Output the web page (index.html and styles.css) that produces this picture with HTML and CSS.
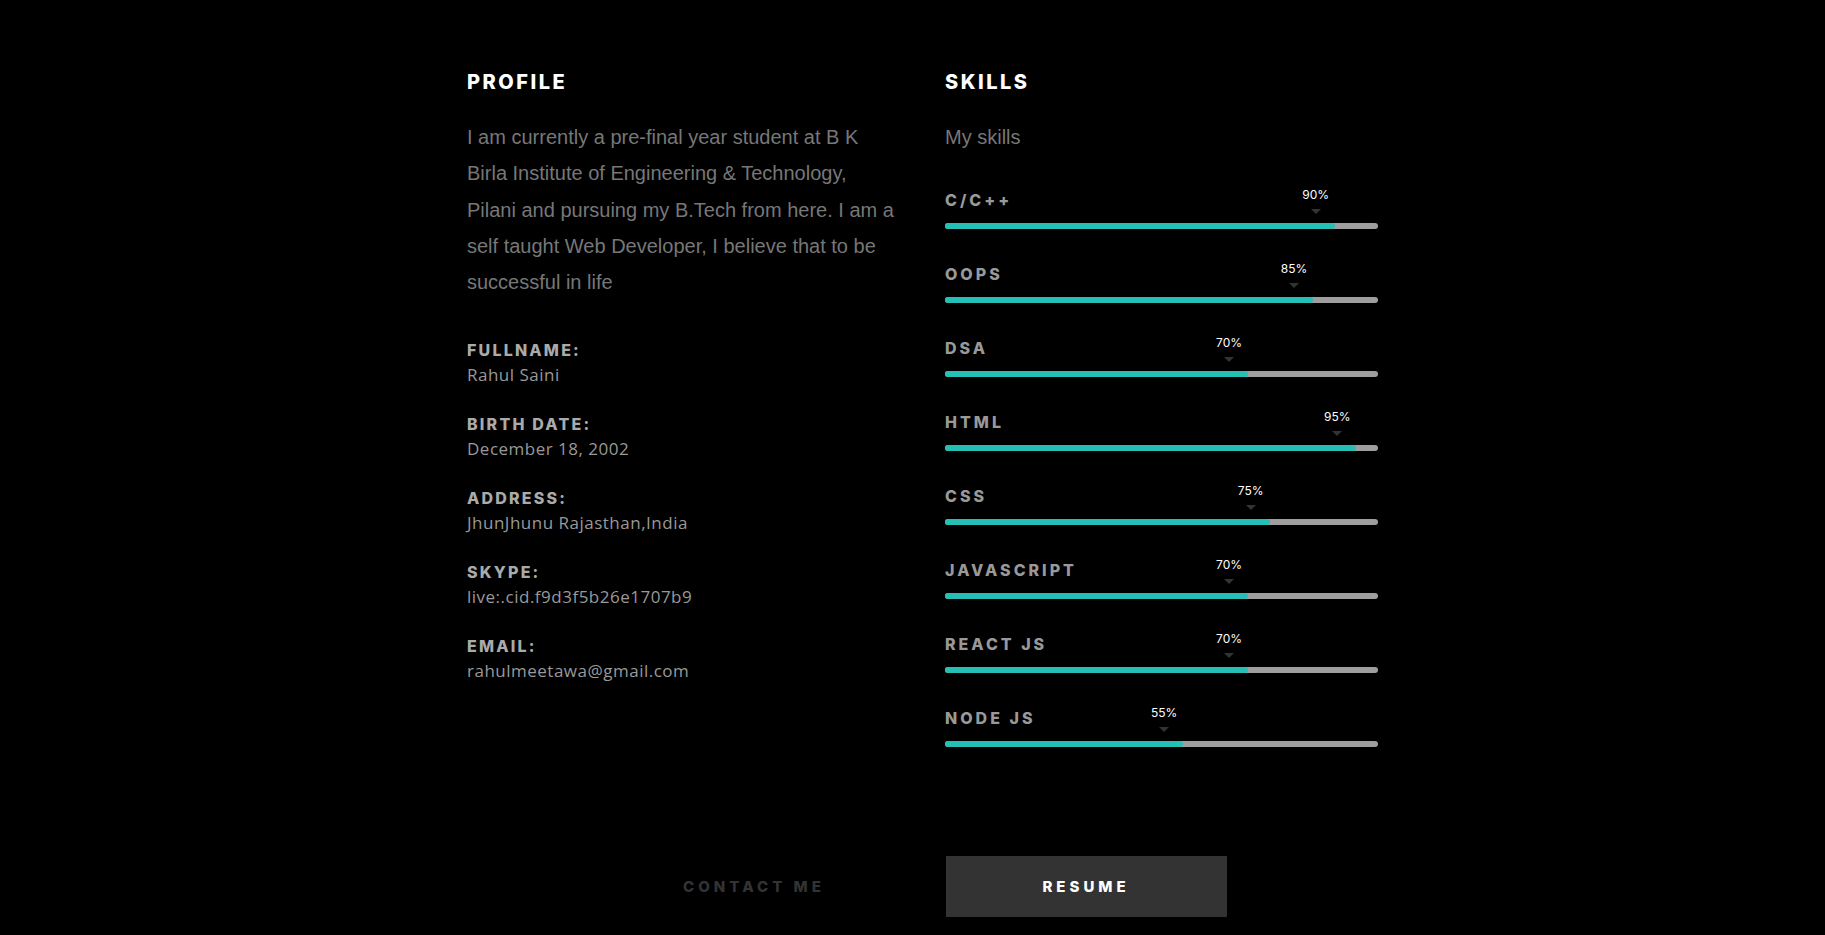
FILE: index.html
```html
<!DOCTYPE html>
<html lang="en">
<head>
<meta charset="utf-8">
<title>About</title>
<link rel="stylesheet" href="styles.css">
</head>
<body>
<main class="about">
  <section class="col">
    <h2 class="title">PROFILE</h2>
    <p class="lead">I am currently a pre-final year student at B K Birla Institute of Engineering &amp; Technology, Pilani and pursuing my B.Tech from here. I am a self taught Web Developer, I believe that to be successful in life</p>
    <ul class="info">
      <li class="info-item"><span class="info-label">FULLNAME:</span><span class="info-value">Rahul Saini</span></li>
      <li class="info-item"><span class="info-label">BIRTH DATE:</span><span class="info-value">December 18, 2002</span></li>
      <li class="info-item"><span class="info-label">ADDRESS:</span><span class="info-value">JhunJhunu Rajasthan,India</span></li>
      <li class="info-item"><span class="info-label">SKYPE:</span><span class="info-value">live:.cid.f9d3f5b26e1707b9</span></li>
      <li class="info-item"><span class="info-label">EMAIL:</span><span class="info-value">rahulmeetawa@gmail.com</span></li>
    </ul>
  </section>
  <section class="col">
    <h2 class="title">SKILLS</h2>
    <p class="lead">My skills</p>
    <ul class="skills">
      <li class="skill"><span class="skill-name">C/C++</span><div class="track"><div class="fill" style="width:90%"><span class="tip">90%</span></div></div></li>
      <li class="skill"><span class="skill-name">OOPS</span><div class="track"><div class="fill" style="width:85%"><span class="tip">85%</span></div></div></li>
      <li class="skill"><span class="skill-name">DSA</span><div class="track"><div class="fill" style="width:70%"><span class="tip">70%</span></div></div></li>
      <li class="skill"><span class="skill-name">HTML</span><div class="track"><div class="fill" style="width:95%"><span class="tip">95%</span></div></div></li>
      <li class="skill"><span class="skill-name">CSS</span><div class="track"><div class="fill" style="width:75%"><span class="tip">75%</span></div></div></li>
      <li class="skill"><span class="skill-name">JAVASCRIPT</span><div class="track"><div class="fill" style="width:70%"><span class="tip">70%</span></div></div></li>
      <li class="skill"><span class="skill-name">REACT JS</span><div class="track"><div class="fill" style="width:70%"><span class="tip">70%</span></div></div></li>
      <li class="skill"><span class="skill-name">NODE JS</span><div class="track"><div class="fill" style="width:55%"><span class="tip">55%</span></div></div></li>
    </ul>
  </section>
</main>
<div class="actions">
  <a class="btn btn-ghost" href="#">CONTACT ME</a>
  <a class="btn btn-solid" href="#">RESUME</a>
</div>
</body>
</html>
```
FILE: styles.css
```css
* { box-sizing: border-box; }
html, body { margin: 0; padding: 0; }
body {
  background: #000;
  color: #999;
  font-family: Inter, "Liberation Sans", Arial, sans-serif;
  padding-top: 70px;
  min-height: 935px;
  overflow: hidden;
}
.about {
  display: grid;
  grid-template-columns: 433px 433px;
  column-gap: 45px;
  justify-content: center;
  padding-left: 20px;
}
.title {
  margin: 0;
  font-size: 20px;
  line-height: 24px;
  font-weight: 800;
  letter-spacing: 2.5px;
  color: #fff;
}
.lead {
  margin: 25px 0 0;
  font-family: "Liberation Sans", Arial, sans-serif;
  font-size: 20px;
  line-height: 36.3px;
  color: #777;
}
.info { list-style: none; margin: 40px 0 0; padding: 0; }
.info-item { display: flex; flex-direction: column; margin-bottom: 26px; }
.info-label {
  font-size: 16px;
  line-height: 20px;
  font-weight: 800;
  letter-spacing: 2.2px;
  color: #aaa;
}
.info-value {
  margin-top: 2px;
  font-family: "Open Sans", sans-serif;
  font-size: 17px;
  line-height: 26px;
  color: #999;
  letter-spacing: 0.5px;
}
.skills { list-style: none; margin: 35px 0 0; padding: 0; }
.skill { display: flex; flex-direction: column; margin-bottom: 35px; }
.skill-name {
  font-size: 16px;
  line-height: 20px;
  font-weight: 800;
  letter-spacing: 3px;
  color: #999;
}
.track {
  margin-top: 13px;
  height: 6px;
  border-radius: 3px;
  background: #9e9e9e;
}
.fill {
  position: relative;
  height: 6px;
  border-radius: 3px;
  background: #26bfb5;
}
.tip {
  position: absolute;
  right: 0;
  bottom: calc(100% + 9px);
  width: 38px;
  text-align: center;
  font-size: 12px;
  line-height: 14px;
  color: #fff;
  padding-bottom: 12px;
}
.tip::after {
  content: "";
  position: absolute;
  left: 50%;
  bottom: 0;
  margin-left: -5px;
  border-left: 5px solid transparent;
  border-right: 5px solid transparent;
  border-top: 5px solid #333;
}
.actions {
  display: flex;
  justify-content: center;
  gap: 51px;
  padding-left: 15px;
  margin-top: 74px;
}
.btn {
  width: 281px;
  height: 61px;
  display: flex;
  align-items: center;
  justify-content: center;
  text-decoration: none;
  font-size: 15px;
  font-weight: 800;
  letter-spacing: 4px;
}
.btn-ghost { color: #333; }
.btn-solid { background: #333; color: #fff; }
```
